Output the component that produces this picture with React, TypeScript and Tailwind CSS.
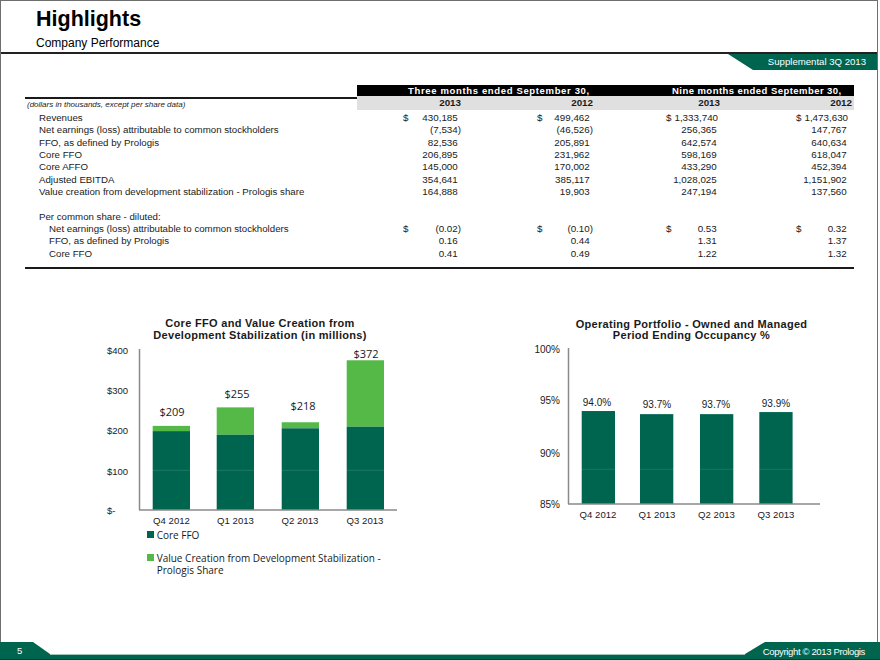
import React from "react";

const DG = "#00654f";
const LG = "#55b948";

type Cell = { d?: boolean; v: string };
type Row = { label: string; indent?: boolean; blank?: boolean; cells?: Cell[] };

const rows: Row[] = [
  { label: "Revenues", cells: [{ d: true, v: "430,185" }, { d: true, v: "499,462" }, { d: true, v: "1,333,740" }, { d: true, v: "1,473,630" }] },
  { label: "Net earnings (loss) attributable to common stockholders", cells: [{ v: "(7,534)" }, { v: "(46,526)" }, { v: "256,365" }, { v: "147,767" }] },
  { label: "FFO, as defined by Prologis", cells: [{ v: "82,536" }, { v: "205,891" }, { v: "642,574" }, { v: "640,634" }] },
  { label: "Core FFO", cells: [{ v: "206,895" }, { v: "231,962" }, { v: "598,169" }, { v: "618,047" }] },
  { label: "Core AFFO", cells: [{ v: "145,000" }, { v: "170,002" }, { v: "433,290" }, { v: "452,394" }] },
  { label: "Adjusted EBITDA", cells: [{ v: "354,641" }, { v: "385,117" }, { v: "1,028,025" }, { v: "1,151,902" }] },
  { label: "Value creation from development stabilization - Prologis share", cells: [{ v: "164,888" }, { v: "19,903" }, { v: "247,194" }, { v: "137,560" }] },
  { label: "", blank: true },
  { label: "Per common share - diluted:" },
  { label: "Net earnings (loss) attributable to common stockholders", indent: true, cells: [{ d: true, v: "(0.02)" }, { d: true, v: "(0.10)" }, { d: true, v: "0.53" }, { d: true, v: "0.32" }] },
  { label: "FFO, as defined by Prologis", indent: true, cells: [{ v: "0.16" }, { v: "0.44" }, { v: "1.31" }, { v: "1.37" }] },
  { label: "Core FFO", indent: true, cells: [{ v: "0.41" }, { v: "0.49" }, { v: "1.22" }, { v: "1.32" }] },
];

const colPad = ["pl-[46px] pr-[9px]", "pl-[67px] pr-[12px]", "pl-[61px] pr-[10px]", "pl-[66px] pr-[4px]"];

function Value({ c, i }: { c: Cell; i: number }) {
  const neg = c.v.startsWith("(");
  return (
    <div className={"flex justify-between gap-[3px] whitespace-nowrap " + colPad[i]}>
      <span>{c.d ? "$" : ""}</span>
      <span>
        {c.v}
        {!neg && <span className="invisible">)</span>}
      </span>
    </div>
  );
}

function Table() {
  return (
    <div className="ml-[24px] mt-[15px] w-[829px] text-[#1a1a1a]">
      <div className="flex h-[11px]">
        <div className="w-[332px]" />
        <div className="w-[497px] bg-black text-white font-bold text-[9.5px] leading-[11px] flex">
          <div className="w-[248px] pl-[51px] tracking-[0.65px] whitespace-nowrap">Three months ended September 30,</div>
          <div className="w-[249px] pl-[67px] tracking-[0.45px] whitespace-nowrap">Nine months ended September 30,</div>
        </div>
      </div>
      <div className="flex h-[14px]">
        <div className="w-[332px] mt-[1px] border-t-2 border-[#1a1a1a] text-[8px] italic pl-[2px] leading-[11px] whitespace-nowrap">
          (dollars in thousands, except per share data)
        </div>
        <div className="w-[497px] bg-[#e0e0e0] grid grid-cols-[113px_135px_125px_124px] font-bold text-[9.8px] leading-[14px]">
          <div className="text-right pr-[9px]">2013</div>
          <div className="text-right pr-[12px]">2012</div>
          <div className="text-right pr-[10px]">2013</div>
          <div className="text-right pr-[2px]">2012</div>
        </div>
      </div>
      <div className="mt-[2px] text-[9.8px]">
        {rows.map((r, idx) => (
          <div key={idx} className="grid grid-cols-[332px_113px_135px_125px_124px] h-[12.33px] leading-[12.33px]">
            <div className={"whitespace-nowrap text-[9.7px] " + (r.indent ? "pl-[24px]" : "pl-[14px]")}>{r.label}</div>
            {r.cells ? r.cells.map((c, i) => <Value key={i} c={c} i={i} />) : null}
          </div>
        ))}
      </div>
      <div className="mt-[7px] border-t-2 border-[#1a1a1a]" />
    </div>
  );
}

function LeftChart() {
  const y = (v: number) => 511 - v * 0.4025;
  const bars = [
    { x: 152.7, core: 196, tot: 209, lab: "$209", lx: 172, ly: 417, q: "Q4 2012", qx: 171.5 },
    { x: 216.7, core: 187, tot: 255, lab: "$255", lx: 237, ly: 399, q: "Q1 2013", qx: 235.5 },
    { x: 281.7, core: 203, tot: 218, lab: "$218", lx: 303, ly: 410.5, q: "Q2 2013", qx: 300 },
    { x: 346.7, core: 207, tot: 372, lab: "$372", lx: 366, ly: 358.5, q: "Q3 2013", qx: 365 },
  ];
  return (
    <div className="ml-[99px] mt-[48px] w-[320px] flex flex-col">
      <div className="text-center font-bold text-[11px] leading-[12px] tracking-[0.3px] text-[#1a1a1a]">
        <div>Core FFO and Value Creation from</div>
        <div>Development Stabilization (in millions)</div>
      </div>
      <svg className="mt-[2px]" width="320" height="185" viewBox="100 344 320 185">
        <g fontFamily="'Liberation Sans', Arial, sans-serif" fontSize="9.5" fill="#1a1a1a">
          <text x="107" y="355">$400</text>
          <text x="107" y="395">$300</text>
          <text x="107" y="435">$200</text>
          <text x="107" y="475.5">$100</text>
          <text x="107" y="515">$-</text>
        </g>
        {bars.map((b) => (
          <g key={b.q}>
            <rect x={b.x} y={y(b.tot)} width="37.3" height={y(b.core) - y(b.tot)} fill={LG} />
            <rect x={b.x} y={y(b.core)} width="37.3" height={511 - y(b.core)} fill={DG} />
            <text x={b.lx} y={b.ly} textAnchor="middle" fontFamily="'Open Sans', sans-serif" fontSize="11" fill="#1a1a1a">{b.lab}</text>
            <text x={b.qx} y="524.5" textAnchor="middle" fontFamily="'Liberation Sans', Arial, sans-serif" fontSize="9.6" fill="#1a1a1a">{b.q}</text>
          </g>
        ))}
        <line x1="140" x2="396" y1="471.3" y2="471.3" stroke="#ffffff" strokeOpacity="0.12" strokeWidth="1" />
        <line x1="139.5" x2="139.5" y1="350" y2="511" stroke="#8a8a8a" strokeWidth="1.5" />
        <line x1="139" x2="397" y1="511" y2="511" stroke="#8a8a8a" strokeWidth="1.5" />
      </svg>
      <div className="pl-[46.7px] font-['Open_Sans',sans-serif] text-[10px] text-[#1a1a1a] leading-[12px] mt-[1px]">
        <div className="flex items-center gap-[3px]">
          <span className="w-[7px] h-[7px] bg-[#00654f]" />
          <span>Core FFO</span>
        </div>
        <div className="flex items-start gap-[3px] mt-[10.6px]">
          <span className="w-[7px] h-[7px] bg-[#55b948] mt-[2.5px] shrink-0" />
          <span className="leading-[12.4px]">
            Value Creation from Development Stabilization -
            <br />
            Prologis Share
          </span>
        </div>
      </div>
    </div>
  );
}

function RightChart() {
  const y = (p: number) => 506 - (p - 85) * 10.33;
  const bars = [
    { x: 581.7, p: 94.0, lab: "94.0%", lx: 597, ly: 407.5, q: "Q4 2012", qx: 598 },
    { x: 640, p: 93.7, lab: "93.7%", lx: 657, ly: 410, q: "Q1 2013", qx: 657 },
    { x: 700, p: 93.7, lab: "93.7%", lx: 716, ly: 410, q: "Q2 2013", qx: 716.5 },
    { x: 759.3, p: 93.9, lab: "93.9%", lx: 776, ly: 409, q: "Q3 2013", qx: 776 },
  ];
  return (
    <div className="ml-[110px] mt-[50px] w-[323px] flex flex-col">
      <div className="text-center font-bold text-[11px] leading-[11.5px] tracking-[0.3px] text-[#1a1a1a]">
        <div>Operating Portfolio - Owned and Managed</div>
        <div>Period Ending Occupancy %</div>
      </div>
      <svg width="323" height="186" viewBox="530 344 323 186">
        <g fontFamily="'Liberation Sans', Arial, sans-serif" fontSize="10" fill="#1a1a1a" textAnchor="end">
          <text x="560" y="355.2">100%</text>
          <text x="560" y="406.2">95%</text>
          <text x="560" y="459.2">90%</text>
          <text x="560" y="510.2">85%</text>
        </g>
        {bars.map((b) => (
          <g key={b.q}>
            <rect x={b.x} y={y(b.p)} width="33.3" height={506 - y(b.p)} fill={DG} />
            <text x={b.lx} y={b.ly} textAnchor="middle" fontFamily="'Liberation Sans', Arial, sans-serif" fontSize="10" fill="#1a1a1a">{b.lab}</text>
            <text x={b.qx} y="520" textAnchor="middle" fontFamily="'Liberation Sans', Arial, sans-serif" fontSize="9.6" fill="#1a1a1a">{b.q}</text>
          </g>
        ))}
        <line x1="569" x2="820" y1="471.3" y2="471.3" stroke="#ffffff" strokeOpacity="0.1" strokeWidth="1" />
        <line x1="568.5" x2="568.5" y1="350" y2="506" stroke="#8a8a8a" strokeWidth="1.5" />
        <line x1="568" x2="820" y1="506" y2="506" stroke="#8a8a8a" strokeWidth="1.5" />
      </svg>
    </div>
  );
}

export default function App() {
  return (
    <div className="w-[878px] h-[660px] bg-white flex flex-col border-l border-t border-r border-[#6e6e6e] font-['Liberation_Sans',Arial,sans-serif] text-[#1a1a1a]">
      <div className="h-[51px] pl-[35px] pt-[8px]">
        <div className="text-[21.5px] font-bold leading-[21.5px] text-black">Highlights</div>
        <div className="text-[12px] leading-[12px] mt-[6px] text-black">Company Performance</div>
      </div>
      <div className="h-[2px] bg-[#222]" />
      <div className="h-[16px] flex justify-end">
        <div className="w-[149px] bg-[#00654f] [clip-path:polygon(0_0,100%_0,100%_100%,25px_100%)] text-white text-[9.6px] leading-[16px] text-right pr-[11px] whitespace-nowrap">
          Supplemental 3Q 2013
        </div>
      </div>
      <Table />
      <div className="flex items-start">
        <LeftChart />
        <RightChart />
      </div>
      <div className="mt-auto -ml-px w-[880px] h-[18px] relative">
        <svg className="absolute inset-0" width="880" height="18" viewBox="0 0 880 18">
          <rect x="0" y="12" width="880" height="6" fill={DG} />
          <rect x="50" y="12" width="695" height="1" fill="#9fc4b8" />
          <polygon points="0,0 33,0 50,12 0,12" fill={DG} />
          <polygon points="765,0 880,0 880,12 745,12" fill={DG} />
          <rect x="0" y="17" width="880" height="1" fill="#0b3f33" />
        </svg>
        <div className="relative flex justify-between items-center h-[18px] text-white text-[9.5px] leading-[18px]">
          <span className="pl-[17px]">5</span>
          <span className="pr-[15px] pt-[1px] tracking-[-0.35px]">Copyright © 2013 Prologis</span>
        </div>
      </div>
    </div>
  );
}
